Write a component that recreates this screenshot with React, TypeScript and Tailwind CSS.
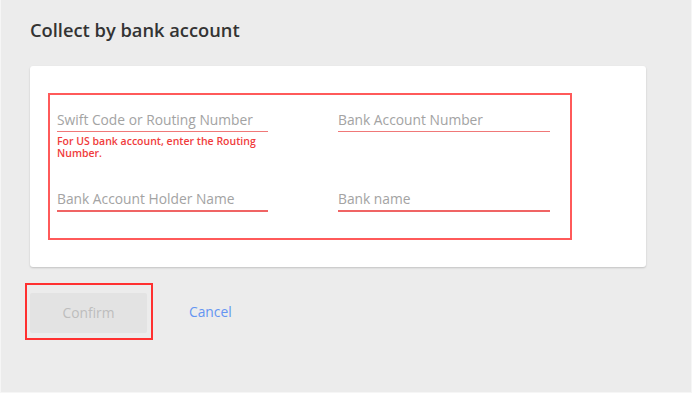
export default function App() {
  const font = { fontFamily: '"Open Sans", "Liberation Sans", sans-serif' }
  return (
    <div
      className="w-[692px] h-[393px] bg-[#ececec] border-x border-b border-[#f6f6f6] overflow-hidden"
      style={font}
    >
      <h1 className="pl-[29px] pt-[18px] text-[18.3px] leading-[24px] font-semibold text-[#333]">
        Collect by bank account
      </h1>

      {/* Card */}
      <div className="ml-[29px] mt-[24px] w-[616px] h-[201px] bg-white rounded-[3px] shadow-[0_1px_2px_rgba(0,0,0,0.18)] pl-[18px] pt-[27px]">
        <div className="w-[524px] h-[147px] border-2 border-[#ff5a5a] pl-[7px] pt-[15px]">
          <div className="flex gap-[70px]">
            <div className="w-[211px]">
              <div className="h-[22px] border-b border-[#f07878] text-[13.8px] leading-[19px] text-[#a3a3a3] whitespace-nowrap">
                Swift Code or Routing Number
              </div>
              <p className="mt-[3px] pr-[2px] text-[10.5px] leading-[12px] font-semibold text-[#f03c3c]">
                For US bank account, enter the Routing Number.
              </p>
            </div>
            <div className="w-[212px]">
              <div className="h-[22px] border-b border-[#f07878] text-[13.8px] leading-[19px] text-[#a3a3a3]">
                Bank Account Number
              </div>
            </div>
          </div>

          <div className="flex gap-[70px] mt-[30px]">
            <div className="w-[211px] h-[23px] border-b-2 border-[#f06464] text-[13.8px] leading-[19px] text-[#a3a3a3]">
              Bank Account Holder Name
            </div>
            <div className="w-[212px] h-[23px] border-b-2 border-[#f06464] text-[13.8px] leading-[19px] text-[#a3a3a3]">
              Bank name
            </div>
          </div>
        </div>
      </div>

      {/* Actions */}
      <div className="flex items-center mt-[16px] ml-[24px]">
        <div className="w-[128px] h-[57px] border-2 border-[#ff3030] pl-[3px] pt-[8px]">
          <button className="w-[117px] h-[40px] bg-[#e3e3e3] rounded-[2px] text-[13.8px] text-[#bdbdbd]">
            Confirm
          </button>
        </div>
        <button className="ml-[36px] mt-[2px] text-[13.8px] text-[#6495f2]">Cancel</button>
      </div>
    </div>
  )
}
